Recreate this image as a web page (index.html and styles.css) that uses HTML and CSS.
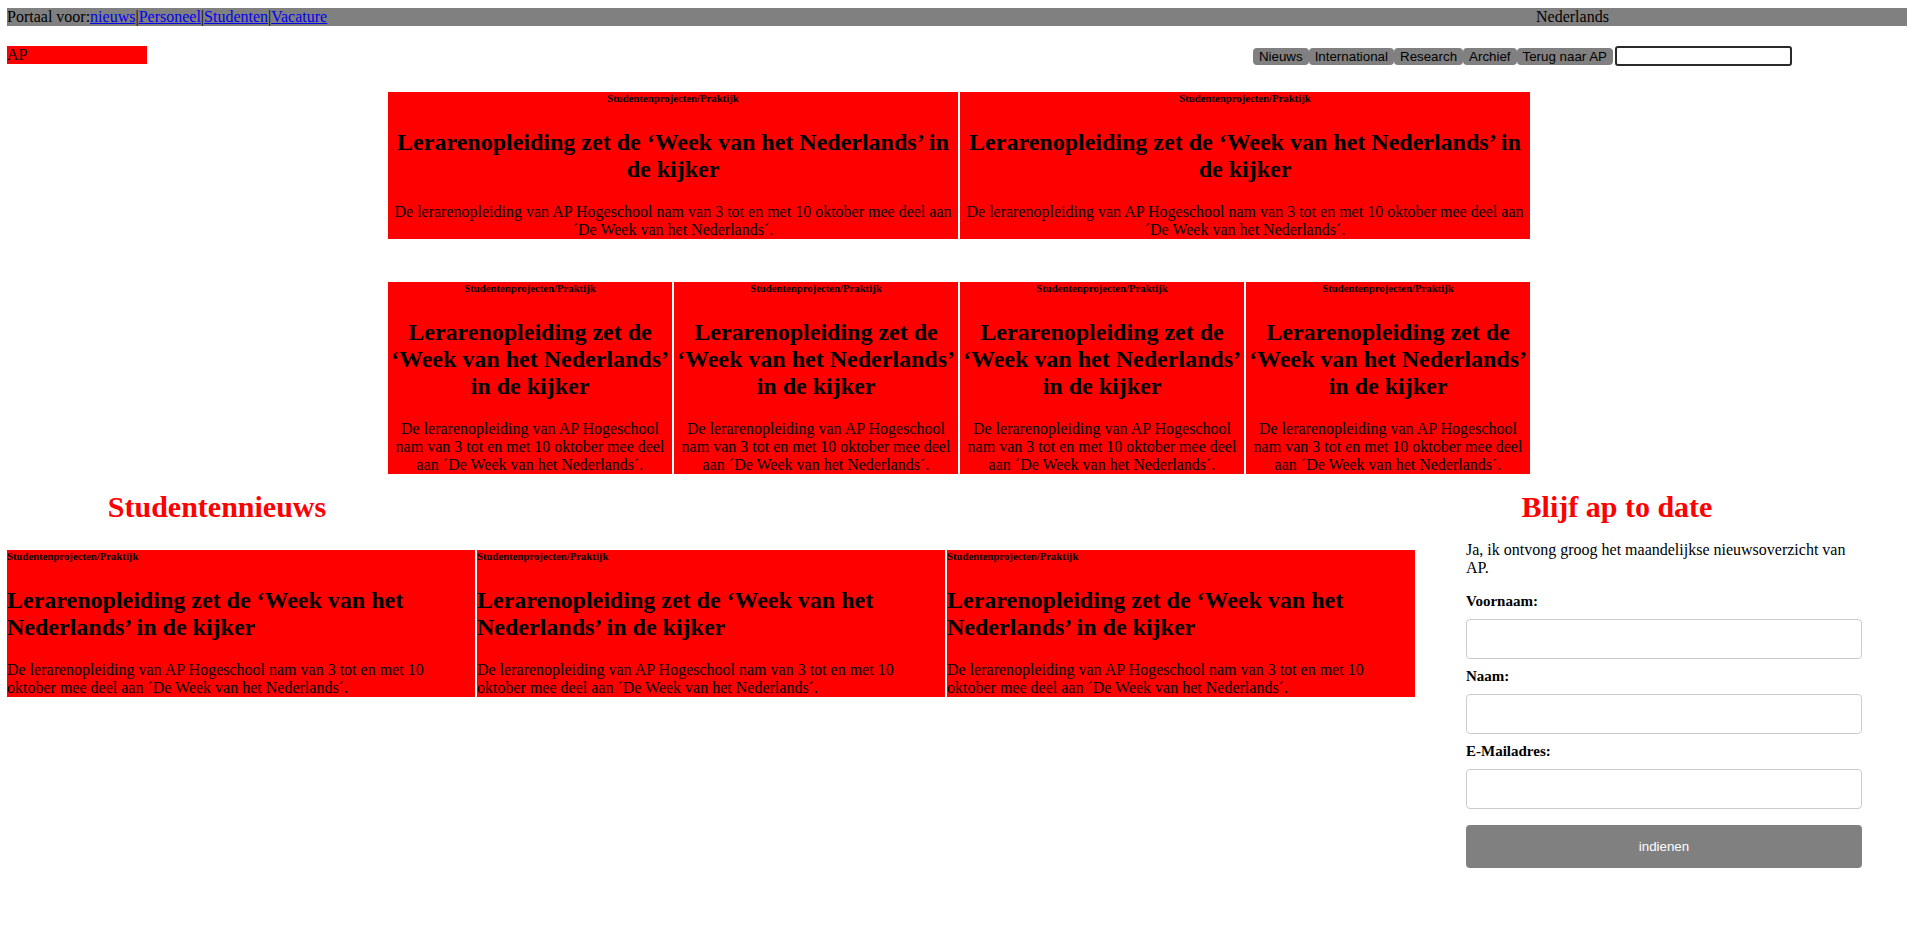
FILE: index.html
```html
<!DOCTYPE html>
<html lang="nl">
<head>
<meta charset="utf-8">
<title>AP Nieuws</title>
<link rel="stylesheet" href="styles.css">
</head>
<body>
<div class="topbar">
  <div class="portal">Portaal voor:<a href="#">nieuws</a>|<a href="#">Personeel</a>|<a href="#">Studenten</a>|<a href="#">Vacature</a></div>
  <div class="lang">Nederlands</div>
</div>

<header class="header">
  <div class="logo">AP</div>
  <nav class="nav">
    <button class="nav-btn" type="button">Nieuws</button><button class="nav-btn" type="button">International</button><button class="nav-btn" type="button">Research</button><button class="nav-btn" type="button">Archief</button><button class="nav-btn" type="button">Terug naar AP</button>
    <input class="search" type="text" aria-label="Zoeken">
  </nav>
</header>

<section class="featured featured-two">
  <article class="card card-center">
    <h6 class="card-cat">Studentenprojecten/Praktijk</h6>
    <h2 class="card-title">Lerarenopleiding zet de ‘Week van het Nederlands’ in de kijker</h2>
    <p class="card-text">De lerarenopleiding van AP Hogeschool nam van 3 tot en met 10 oktober mee deel aan ´De Week van het Nederlands´.</p>
  </article>
  <article class="card card-center">
    <h6 class="card-cat">Studentenprojecten/Praktijk</h6>
    <h2 class="card-title">Lerarenopleiding zet de ‘Week van het Nederlands’ in de kijker</h2>
    <p class="card-text">De lerarenopleiding van AP Hogeschool nam van 3 tot en met 10 oktober mee deel aan ´De Week van het Nederlands´.</p>
  </article>
</section>

<section class="featured featured-four">
  <article class="card card-center">
    <h6 class="card-cat">Studentenprojecten/Praktijk</h6>
    <h2 class="card-title">Lerarenopleiding zet de ‘Week van het Nederlands’ in de kijker</h2>
    <p class="card-text">De lerarenopleiding van AP Hogeschool nam van 3 tot en met 10 oktober mee deel aan ´De Week van het Nederlands´.</p>
  </article>
  <article class="card card-center">
    <h6 class="card-cat">Studentenprojecten/Praktijk</h6>
    <h2 class="card-title">Lerarenopleiding zet de ‘Week van het Nederlands’ in de kijker</h2>
    <p class="card-text">De lerarenopleiding van AP Hogeschool nam van 3 tot en met 10 oktober mee deel aan ´De Week van het Nederlands´.</p>
  </article>
  <article class="card card-center">
    <h6 class="card-cat">Studentenprojecten/Praktijk</h6>
    <h2 class="card-title">Lerarenopleiding zet de ‘Week van het Nederlands’ in de kijker</h2>
    <p class="card-text">De lerarenopleiding van AP Hogeschool nam van 3 tot en met 10 oktober mee deel aan ´De Week van het Nederlands´.</p>
  </article>
  <article class="card card-center">
    <h6 class="card-cat">Studentenprojecten/Praktijk</h6>
    <h2 class="card-title">Lerarenopleiding zet de ‘Week van het Nederlands’ in de kijker</h2>
    <p class="card-text">De lerarenopleiding van AP Hogeschool nam van 3 tot en met 10 oktober mee deel aan ´De Week van het Nederlands´.</p>
  </article>
</section>

<div class="main">
  <section class="students">
    <h2 class="section-title">Studentennieuws</h2>
    <div class="student-grid">
      <article class="card">
        <h6 class="card-cat">Studentenprojecten/Praktijk</h6>
        <h2 class="card-title">Lerarenopleiding zet de ‘Week van het Nederlands’ in de kijker</h2>
        <p class="card-text">De lerarenopleiding van AP Hogeschool nam van 3 tot en met 10 oktober mee deel aan ´De Week van het Nederlands´.</p>
      </article>
      <article class="card">
        <h6 class="card-cat">Studentenprojecten/Praktijk</h6>
        <h2 class="card-title">Lerarenopleiding zet de ‘Week van het Nederlands’ in de kijker</h2>
        <p class="card-text">De lerarenopleiding van AP Hogeschool nam van 3 tot en met 10 oktober mee deel aan ´De Week van het Nederlands´.</p>
      </article>
      <article class="card">
        <h6 class="card-cat">Studentenprojecten/Praktijk</h6>
        <h2 class="card-title">Lerarenopleiding zet de ‘Week van het Nederlands’ in de kijker</h2>
        <p class="card-text">De lerarenopleiding van AP Hogeschool nam van 3 tot en met 10 oktober mee deel aan ´De Week van het Nederlands´.</p>
      </article>
    </div>
  </section>

  <aside class="sidebar">
    <h2 class="sidebar-title">Blijf ap to date</h2>
    <p class="sidebar-text">Ja, ik ontvong groog het maandelijkse nieuwsoverzicht van AP.</p>
    <form class="signup">
      <label class="signup-label" for="voornaam">Voornaam:</label>
      <input class="signup-input" id="voornaam" type="text">
      <label class="signup-label" for="naam">Naam:</label>
      <input class="signup-input" id="naam" type="text">
      <label class="signup-label" for="email">E-Mailadres:</label>
      <input class="signup-input" id="email" type="text">
      <button class="signup-btn" type="button">indienen</button>
    </form>
  </aside>
</div>
</body>
</html>
```

FILE: styles.css
```css
body {
  margin: 8px 7px;
  font-family: "Liberation Serif", "Times New Roman", serif;
  font-size: 16px;
  line-height: 18px;
  color: #000;
  background: #fff;
}

a {
  color: #0000ee;
}

/* top bar */
.topbar {
  display: flex;
  background: #808080;
  height: 18px;
  line-height: 18px;
}

.portal {
  width: 1529px;
}

/* header */
.header {
  display: flex;
  justify-content: space-between;
  align-items: flex-start;
  margin-top: 20px;
}

.logo {
  width: 140px;
  height: 18px;
  line-height: 18px;
  background: #ff0000;
}

.nav {
  display: flex;
  align-items: center;
  margin-right: 115px;
  height: 20px;
}

.nav-btn {
  font-family: "Liberation Sans", Arial, sans-serif;
  font-size: 13.333px;
  line-height: 15px;
  color: #000;
  background: #808080;
  border: none;
  border-radius: 4px;
  padding: 1px 6px;
  margin: 0;
}

.search {
  box-sizing: border-box;
  width: 177px;
  height: 20px;
  margin-left: 2px;
  border: 2px solid #2a2a2a;
  border-radius: 3px;
  background: #fff;
  padding: 0 2px;
}

/* featured grids */
.featured {
  display: grid;
  gap: 2px;
  width: 1142px;
  margin-left: 381px;
}

.featured-two {
  grid-template-columns: repeat(2, 1fr);
  margin-top: 26px;
}

.featured-four {
  grid-template-columns: repeat(4, 1fr);
  margin-top: 43px;
}

/* cards */
.card {
  background: #ff0000;
}

.card-center {
  text-align: center;
}

.card-cat {
  font-size: 10.72px;
  line-height: 12px;
  font-weight: bold;
  margin: 0 0 25px;
}

.card-title {
  font-size: 24px;
  line-height: 27px;
  font-weight: bold;
  margin: 0 0 20px;
}

.card-text {
  margin: 0;
  line-height: 18px;
}

/* main area */
.main {
  display: grid;
  grid-template-columns: 1408px 1fr;
  margin-top: 16px;
}

.section-title,
.sidebar-title {
  font-size: 30px;
  line-height: 34px;
  font-weight: bold;
  color: #ff0000;
  text-align: center;
  margin: 0;
}

.section-title {
  width: 420px;
  margin-bottom: 26px;
}

.student-grid {
  display: grid;
  grid-template-columns: repeat(3, 1fr);
  gap: 2px;
}

/* sidebar */
.sidebar {
  padding-left: 51px;
  width: 396px;
}

.sidebar-title {
  width: 302px;
}

.sidebar-text {
  margin: 17px 0 15px;
  line-height: 18px;
}

.signup {
  display: flex;
  flex-direction: column;
}

.signup-label {
  font-size: 15px;
  font-weight: bold;
  line-height: 19px;
  height: 19px;
}

.signup-input {
  box-sizing: border-box;
  width: 100%;
  height: 40px;
  margin: 8px 0;
  padding: 12px 20px;
  border: 1px solid #ccc;
  border-radius: 4px;
  background: #fff;
}

.signup-btn {
  box-sizing: border-box;
  width: 100%;
  height: 43px;
  margin-top: 8px;
  border: none;
  border-radius: 4px;
  background: #808080;
  color: #fff;
  font-family: "Liberation Sans", Arial, sans-serif;
  font-size: 13.333px;
}
```
